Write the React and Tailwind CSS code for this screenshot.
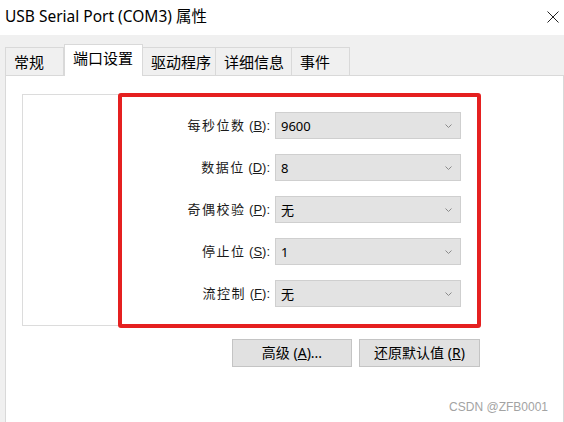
import React from 'react';

const fields = [
  { label: '每秒位数', key: 'B', value: '9600' },
  { label: '数据位', key: 'D', value: '8' },
  { label: '奇偶校验', key: 'P', value: '无' },
  { label: '停止位', key: 'S', value: '1' },
  { label: '流控制', key: 'F', value: '无' },
];

const tabs = ['常规', '端口设置', '驱动程序', '详细信息', '事件'];
const tabWidths = ['w-[59px]', 'w-[79px]', 'w-[73px]', 'w-[76px]', 'w-[58px]'];

function Chevron() {
  return (
    <svg width="7" height="4" viewBox="0 0 7 4" className="mr-[8px]">
      <path d="M0.5 0.5 L3.5 3.5 L6.5 0.5" fill="none" stroke="#8a8a8a" strokeWidth="1" />
    </svg>
  );
}

export default function App() {
  return (
    <div className="w-[564px] h-[422px] overflow-hidden flex flex-col bg-[#f0f0f0] text-black font-['Noto_Sans','Noto_Sans_CJK_SC',sans-serif]">
      {/* title bar */}
      <div className="h-[35px] shrink-0 bg-white flex items-center justify-between pl-[5px] pr-[5px] pb-[3px]">
        <span className="text-[15.5px] leading-[20px]">USB Serial Port (COM3) 属性</span>
        <svg width="12" height="12" viewBox="0 0 12 12" className="mt-[1px]">
          <path d="M0.5 0.5 L11.5 11.5 M11.5 0.5 L0.5 11.5" stroke="#222" strokeWidth="1" />
        </svg>
      </div>

      <div className="flex-1 flex flex-col pl-[5px]">
        {/* tabs */}
        <div className="h-[40px] shrink-0 flex items-end">
          {tabs.map((t, i) =>
            i === 1 ? (
              <div
                key={t}
                className={`${tabWidths[i]} h-[32px] -mb-px z-10 bg-white border border-b-0 border-[#d9d9d9] pl-[8px] pt-[3px] text-[15px] leading-[20px]`}
              >
                {t}
              </div>
            ) : (
              <div
                key={t}
                className={`${tabWidths[i]} h-[28px] border-t border-r ${i === 0 ? 'border-l' : ''} border-[#d9d9d9] pl-[8px] pt-[4px] text-[15px] leading-[20px]`}
              >
                {t}
              </div>
            )
          )}
        </div>

        {/* panel */}
        <div className="flex-1 bg-white border border-b-0 border-[#d9d9d9] flex flex-col">
          <div className="ml-[16px] mt-[18px] w-[458px] h-[232px] border border-[#dcdcdc] flex justify-end">
            <div className="self-start -mt-[2px] -mr-[2px] w-[363px] h-[235px] border-[4px] border-[#e52020] rounded-[3px] pt-[15px] pr-[16px] flex flex-col gap-[15px]">
              {fields.map((f) => (
                <div key={f.key} className="h-[27px] flex items-center justify-end">
                  <span className="text-[13px] leading-[18px] text-[#1a1a1a]">
                    <span className="tracking-[1.5px]">{f.label}</span>
                    <span className="font-['Liberation_Sans',sans-serif]">
                      {' '}(<span className="underline">{f.key}</span>):
                    </span>
                  </span>
                  <div className="ml-[5px] w-[186px] h-[27px] bg-[#e3e3e3] border border-[#cfcfcf] flex items-center justify-between pl-[5px]">
                    <span className="text-[13px] leading-[18px]">{f.value}</span>
                    <Chevron />
                  </div>
                </div>
              ))}
            </div>
          </div>

          <div className="ml-[16px] mt-[13px] w-[458px] flex justify-end gap-[7px]">
            <button className="w-[120px] h-[28px] bg-[#e1e1e1] border border-[#c4c4c4] text-[14px] leading-[20px]">
              高级 (<span className="underline">A</span>)...
            </button>
            <button className="w-[121px] h-[28px] bg-[#e1e1e1] border border-[#c4c4c4] text-[14px] leading-[20px]">
              还原默认值 (<span className="underline">R</span>)
            </button>
          </div>

          <div className="mt-auto self-end mr-[15px] mb-[7px] text-[12px] leading-[15px] text-[#a3a3a3] font-['Liberation_Sans',sans-serif]">
            CSDN @ZFB0001
          </div>
        </div>
      </div>
    </div>
  );
}
